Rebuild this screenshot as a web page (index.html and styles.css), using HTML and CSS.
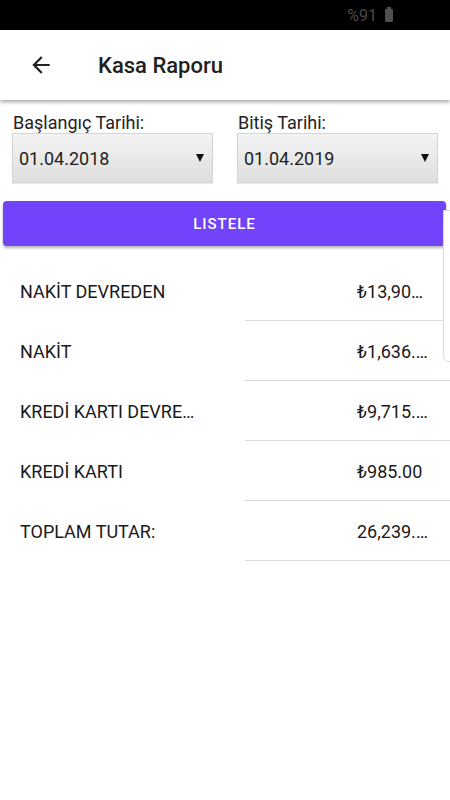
FILE: index.html
```html
<!DOCTYPE html>
<html lang="tr">
<head>
    <meta charset="UTF-8">
    <meta name="viewport" content="width=device-width, initial-scale=1.0">
    <title>Kasa Raporu</title>
    <link rel="stylesheet" href="styles.css">
</head>
<body>
    <div class="status-bar">
        <span class="battery-text">%91</span>
        <span class="battery-icon"></span>
    </div>

    <header class="app-bar">
        <button class="back-btn" aria-label="Geri">
            <svg width="26" height="26" viewBox="0 0 24 24">
                <path d="M20 11H7.83l5.59-5.59L12 4l-8 8 8 8 1.41-1.41L7.83 13H20v-2z" fill="#212121"/>
            </svg>
        </button>
        <h1>Kasa Raporu</h1>
    </header>

    <main class="report">
        <div class="filters">
            <div class="filter-group">
                <label>Başlangıç Tarihi:</label>
                <div class="date-select">
                    <span>01.04.2018</span>
                    <span class="caret"></span>
                </div>
            </div>
            <div class="filter-group">
                <label>Bitiş Tarihi:</label>
                <div class="date-select">
                    <span>01.04.2019</span>
                    <span class="caret"></span>
                </div>
            </div>
        </div>

        <button class="list-btn">LISTELE</button>

        <div class="result-list">
            <div class="result-row">
                <span class="row-label">NAKİT DEVREDEN</span>
                <span class="row-value">₺13,904.00</span>
            </div>
            <div class="result-row">
                <span class="row-label">NAKİT</span>
                <span class="row-value">₺1,636.00</span>
            </div>
            <div class="result-row">
                <span class="row-label short">KREDİ KARTI DEVREDEN</span>
                <span class="row-value">₺9,715.00</span>
            </div>
            <div class="result-row">
                <span class="row-label">KREDİ KARTI</span>
                <span class="row-value">₺985.00</span>
            </div>
            <div class="result-row">
                <span class="row-label">TOPLAM TUTAR:</span>
                <span class="row-value">26,239.00</span>
            </div>
        </div>

        <div class="side-panel"></div>
    </main>
</body>
</html>
```

FILE: styles.css
```css
* {
    margin: 0;
    padding: 0;
    box-sizing: border-box;
}

body {
    font-family: Roboto, 'Noto Sans', sans-serif;
    background: white;
    color: #1e1e1e;
    width: 450px;
    min-height: 800px;
    overflow: hidden;
}

.status-bar {
    height: 30px;
    background: black;
    display: flex;
    justify-content: flex-end;
    align-items: center;
    gap: 8px;
    padding-right: 57px;
}

.battery-text {
    color: #4a4a4a;
    font-size: 16px;
}

.battery-icon {
    width: 8px;
    height: 13px;
    background: #4f4f4f;
    border-radius: 1px;
    position: relative;
}

.battery-icon::before {
    content: '';
    position: absolute;
    top: -2px;
    left: 2px;
    width: 4px;
    height: 2px;
    background: #4f4f4f;
}

.app-bar {
    height: 70px;
    display: flex;
    align-items: center;
    background: white;
    box-shadow: 0 2px 4px rgba(0, 0, 0, 0.35);
    position: relative;
    z-index: 1;
}

.back-btn {
    border: none;
    background: none;
    margin-left: 28px;
    width: 26px;
    height: 26px;
    display: flex;
}

.app-bar h1 {
    margin-left: 44px;
    font-size: 22px;
    font-weight: 500;
    color: #212121;
}

.report {
    position: relative;
}

.filters {
    display: grid;
    grid-template-columns: 201px 201px;
    gap: 24px;
    padding: 12px 12px 0;
}

.filter-group label {
    display: block;
    font-size: 18px;
    color: #222;
    padding-left: 1px;
    line-height: 21px;
}

.date-select {
    height: 50px;
    display: flex;
    align-items: center;
    justify-content: space-between;
    padding: 0 8px 0 6px;
    background: linear-gradient(#f4f4f4, #dedede);
    border: 1px solid #d4d4d4;
    box-shadow: 0 1px 1px rgba(0, 0, 0, 0.08);
    font-size: 18px;
    color: #1e1e1e;
}

.caret {
    width: 0;
    height: 0;
    border-left: 4px solid transparent;
    border-right: 4px solid transparent;
    border-top: 8px solid #111;
}

.list-btn {
    display: block;
    width: 443px;
    height: 45px;
    margin: 18px 0 0 3px;
    border: none;
    border-radius: 4px;
    background: #7144fc;
    color: white;
    font-family: Roboto, sans-serif;
    font-size: 15px;
    font-weight: 500;
    letter-spacing: 1px;
    box-shadow: 0 2px 3px rgba(0, 0, 0, 0.3);
}

.result-list {
    margin-top: 15px;
}

.result-row {
    height: 60px;
    display: flex;
    align-items: center;
    padding-left: 20px;
    font-size: 18px;
    color: #1a1a1a;
    background: linear-gradient(#dadada, #dadada) no-repeat right bottom / 205px 1px;
}

.row-label {
    flex: none;
    width: 337px;
    white-space: nowrap;
    overflow: hidden;
    text-overflow: ellipsis;
}

.row-label.short {
    width: 176px;
    margin-right: 161px;
}

.row-value {
    width: 73px;
    white-space: nowrap;
    overflow: hidden;
    text-overflow: ellipsis;
}

.side-panel {
    position: absolute;
    top: 110px;
    right: -10px;
    width: 17px;
    height: 152px;
    background: white;
    border: 1px solid #dcdcdc;
    border-radius: 0 0 0 6px;
}
```
